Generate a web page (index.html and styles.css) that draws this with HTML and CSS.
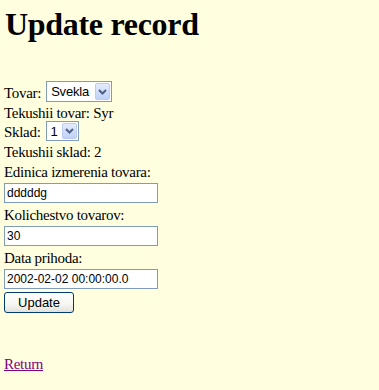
FILE: index.html
```html
<!DOCTYPE html>
<html lang="en">
<head>
    <meta charset="UTF-8">
    <meta name="viewport" content="width=device-width, initial-scale=1.0">
    <title>Update record</title>
    <link rel="stylesheet" href="styles.css">
</head>
<body>
    <h1 class="title">Update record</h1>
    <form class="record-form" id="recordForm">
        <div class="select-row row-tovar">
            <label for="tovar">Tovar:</label>
            <span class="select-box box-tovar">
                <select id="tovar" name="tovar">
                    <option>Svekla</option>
                    <option>Syr</option>
                </select>
                <span class="drop-button"><svg width="9" height="6" viewBox="0 0 9 6"><polyline points="1,1 4.5,4.5 8,1" fill="none" stroke="#4d6185" stroke-width="2"/></svg></span>
            </span>
        </div>
        <div class="line">Tekushii tovar: Syr</div>
        <div class="select-row row-sklad">
            <label for="sklad">Sklad:</label>
            <span class="select-box box-sklad">
                <select id="sklad" name="sklad">
                    <option>1</option>
                    <option>2</option>
                </select>
                <span class="drop-button"><svg width="9" height="6" viewBox="0 0 9 6"><polyline points="1,1 4.5,4.5 8,1" fill="none" stroke="#4d6185" stroke-width="2"/></svg></span>
            </span>
        </div>
        <div class="line">Tekushii sklad: 2</div>
        <label class="line field-label" for="edinica">Edinica izmerenia tovara:</label>
        <input class="field" type="text" id="edinica" name="edinica" value="dddddg">
        <label class="line field-label" for="kolichestvo">Kolichestvo tovarov:</label>
        <input class="field" type="text" id="kolichestvo" name="kolichestvo" value="30">
        <label class="line field-label" for="data">Data prihoda:</label>
        <input class="field" type="text" id="data" name="data" value="2002-02-02 00:00:00.0">
        <button class="update-button" type="submit">Update</button>
    </form>
    <a class="return-link" href="#">Return</a>
</body>
</html>
```

FILE: styles.css
```css
body {
    margin: 0;
    padding: 6px 0 0 4px;
    background-color: #ffffe0;
    color: #000;
    font-family: "Liberation Serif", "Times New Roman", serif;
    font-size: 15px;
    letter-spacing: -0.3px;
}
.title {
    margin: 0 0 37px 1px;
    font-size: 32px;
    line-height: 37px;
    font-weight: bold;
    letter-spacing: -0.3px;
}
.record-form {
    display: flex;
    flex-direction: column;
    align-items: flex-start;
}
.line {
    display: block;
    line-height: 19px;
    height: 19px;
}
.select-row {
    display: flex;
    align-items: flex-start;
}
.select-row label {
    line-height: 19px;
}
.row-tovar {
    height: 24px;
}
.row-tovar label {
    margin-top: 4px;
}
.row-sklad {
    height: 20px;
}
.select-box {
    position: relative;
    display: block;
    margin-left: 5px;
}
.box-tovar {
    margin-top: 1px;
}
.box-sklad {
    margin-top: -2px;
}
.select-box select {
    display: block;
    -webkit-appearance: none;
    appearance: none;
    box-sizing: border-box;
    height: 21px;
    border: 1px solid #7f9db9;
    border-radius: 0;
    background: #fff;
    color: #000;
    padding: 0 0 0 4px;
    margin: 0;
    font-family: "Liberation Sans", Arial, sans-serif;
    font-size: 13px;
    letter-spacing: -0.2px;
    outline: none;
}
.box-tovar select {
    width: 66px;
}
.box-sklad select {
    width: 33px;
    height: 20px;
}
/* XP style arrow button sits over the right end of the select */
.drop-button {
    position: absolute;
    top: 2px;
    right: 2px;
    bottom: 2px;
    width: 15px;
    box-sizing: border-box;
    border: 1px solid #bccbf0;
    border-radius: 2px;
    background: linear-gradient(#e4ecfd, #bfd1f8);
    display: flex;
    align-items: center;
    justify-content: center;
    pointer-events: none;
}
.field-label {
    margin-top: 1px;
}
.field {
    box-sizing: border-box;
    width: 154px;
    height: 20px;
    margin: 1px 0 2px 0;
    padding: 1px 2px;
    border: 1px solid #7f9db9;
    background: #fff;
    color: #000;
    font-family: "Liberation Sans", Arial, sans-serif;
    font-size: 12px;
    letter-spacing: 0;
    outline: none;
}
.update-button {
    box-sizing: border-box;
    width: 70px;
    height: 21px;
    margin-top: 1px;
    padding: 0;
    border: 1px solid #003c74;
    border-radius: 3px;
    background: linear-gradient(#ffffff 0%, #f6f6f2 60%, #e3e1d8 100%);
    color: #000;
    font-family: "Liberation Sans", Arial, sans-serif;
    font-size: 13px;
    letter-spacing: 0;
}
.return-link {
    display: inline-block;
    margin-top: 42px;
    line-height: 19px;
    color: #800080;
    text-decoration: underline;
}
```
